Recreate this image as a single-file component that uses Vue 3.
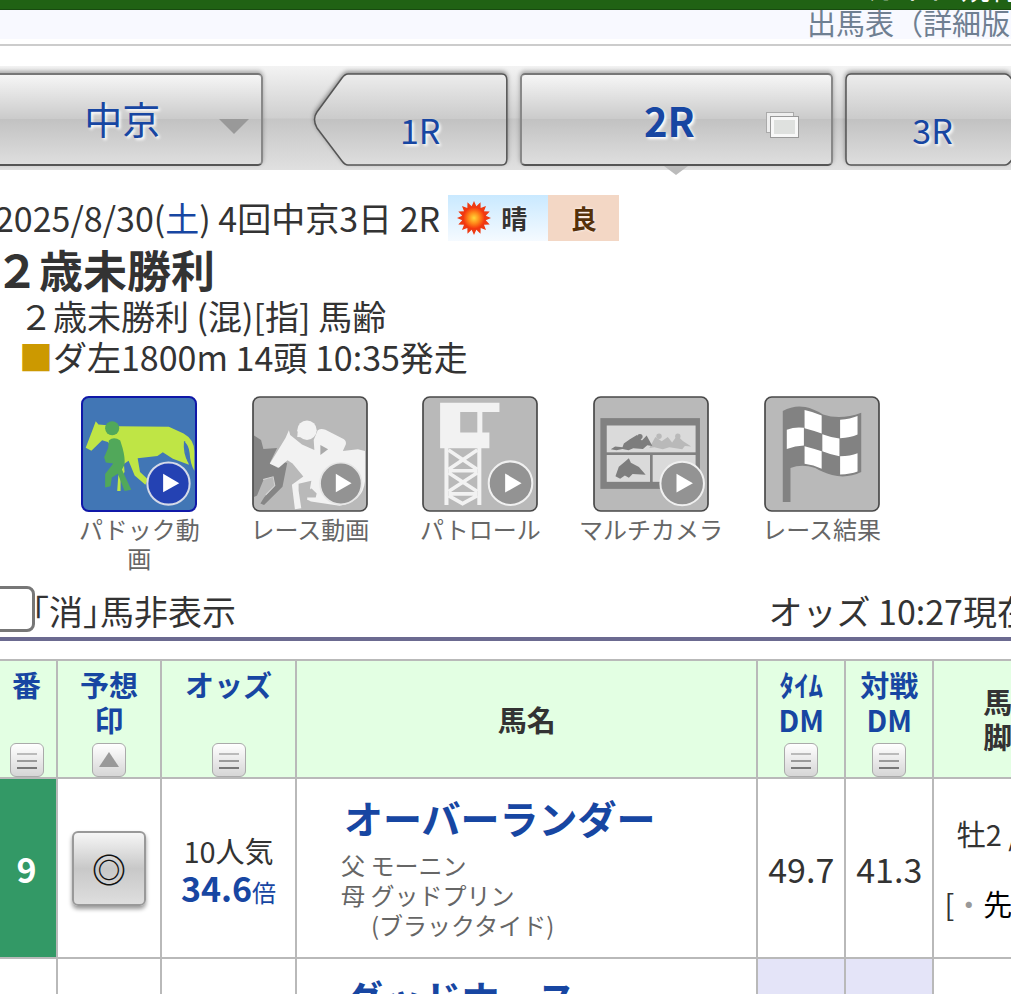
<template>
  <div class="page">
    <div class="site-bar"><span>ガイド 規約</span></div>
    <header class="page-title"><span>出馬表（詳細版）</span></header>

    <nav class="race-nav">
      <div class="venue">
        <select v-model="venue" class="plate" aria-label="開催場">
          <option>中京</option>
        </select>
        <i class="caret"></i>
      </div>
      <button class="race side prev">
        <svg class="shape" viewBox="0 0 195 93" preserveAspectRatio="none">
          <path d="M35 1H189Q194 1 194 7V86Q194 92 189 92H35Q32 92 29 88L4 55Q-1 46 4 39L29 5Q32 1 35 1Z" fill="url(#plate)" stroke="#555" stroke-width="1.5" />
        </svg>
        <span>1R</span>
      </button>
      <button class="race plate current">
        <span>2R</span>
        <svg class="windows" width="36" height="30" viewBox="0 0 36 30">
          <rect x="1.5" y="1.5" width="27" height="20" fill="#eee" stroke="#aaa" />
          <rect x="5.5" y="5.5" width="28" height="21" fill="#dfe1df" stroke="#999" />
          <rect x="7.5" y="7.5" width="24" height="17" fill="none" stroke="#f8f8f8" stroke-width="3" />
        </svg>
      </button>
      <button class="race side next">
        <svg class="shape" viewBox="0 0 195 93" preserveAspectRatio="none">
          <defs>
            <linearGradient id="plate" x1="0" y1="0" x2="0" y2="1">
              <stop offset="0" stop-color="#ededed" />
              <stop offset="0.49" stop-color="#cbcbcb" />
              <stop offset="0.5" stop-color="#c2c2c2" />
              <stop offset="1" stop-color="#dedede" />
            </linearGradient>
          </defs>
          <path d="M160 1H6Q1 1 1 7V86Q1 92 6 92H160Q163 92 166 88L191 55Q196 46 191 39L166 5Q163 1 160 1Z" fill="url(#plate)" stroke="#555" stroke-width="1.5" />
        </svg>
        <span>3R</span>
      </button>
    </nav>

    <main class="content">
      <div class="date">
        <span>2025/8/30(<b>土</b>) 4回中京3日 2R</span>
        <span class="badge fine">
          <svg width="34" height="34" viewBox="0 0 34 34">
            <defs>
              <radialGradient id="sun">
                <stop offset="0" stop-color="#ffd83a" />
                <stop offset="0.5" stop-color="#ff8a1a" />
                <stop offset="1" stop-color="#f4320d" />
              </radialGradient>
            </defs>
            <polygon :points="sunPoints" fill="#ee3a12" />
            <circle cx="17" cy="17" r="11" fill="url(#sun)" />
          </svg>
          晴
        </span>
        <span class="badge firm">良</span>
      </div>
      <h1>２歳未勝利</h1>
      <p>２歳未勝利 (混)[指] 馬齢</p>
      <p><span class="dirt">■</span>ダ左1800m 14頭 10:35発走</p>

      <div class="movies">
        <a href="#">
          <svg class="icon" viewBox="36 35 346 346">
            <rect x="39" y="38" width="340" height="340" rx="20" fill="#4176b5" stroke="#1018a8" stroke-width="6" />
            <path d="M80 110L88 120L150 125L298 127L342 147Q374 165 374 200V258Q362 238 360 205Q357 180 345 172Q344 205 358 240L310 222L280 203L264 214L205 221L212 262L236 284L228 300L196 272L178 228L164 238L166 262L154 280V318H144L147 275L157 240L130 190L116 172L99 167L67 198L50 189L72 132Z" fill="#bfe545" />
            <path d="M345 170Q342 205 357 232" fill="none" stroke="#4176b5" stroke-width="4" />
            <circle cx="129" cy="131" r="21" fill="#51a85a" />
            <path d="M119 168Q134 154 153 168L160 190Q168 220 166 240L158 254L186 315L166 318L146 267L128 278L124 304L108 308V268L132 236L110 233L105 218L117 190Z" fill="#51a85a" />
            <circle cx="297" cy="296" r="63" fill="#2442b3" stroke="#d5dae8" stroke-width="6" />
            <path d="M281 267L329 295L281 322Z" fill="#fff" />
          </svg>
          <span>パドック動<br />画</span>
        </a>
        <a href="#">
          <svg class="icon" viewBox="39 35 346 346">
            <rect x="42" y="38" width="340" height="340" rx="20" fill="#b9b9b9" stroke="#484848" stroke-width="5" />
            <path d="M45 153L66 166L73 193L114 190L92 235L116 250L135 232L144 235L130 306L75 360L64 356L75 338L107 301L101 277L74 283L54 332L45 336Z" fill="#858585" />
            <path d="M72 284L102 276L107 302L80 330" fill="none" stroke="#d5d5d5" stroke-width="3" />
            <path d="M149 137L153 151L188 180L225 196L223 166L235 137Q245 130 258 136L312 163Q321 169 319 179L310 199L355 194L376 199V290Q370 350 300 362L215 350L203 344L205 336L229 335L212 310L216 288L178 297V317L186 370L167 373L158 300L192 275L160 236L145 227L119 249L92 237L139 160Z" fill="#f2f2f2" />
            <path d="M243 181L266 194L243 211Z" fill="#aaa" />
            <path d="M216 310L232 326L229 338L205 338Z" fill="#b9b9b9" />
            <circle cx="203" cy="137" r="29" fill="#f2f2f2" />
            <path d="M175 145L174 157L188 158Z" fill="#f2f2f2" />
            <circle cx="304" cy="296" r="62" fill="#939393" stroke="#e6e6e6" stroke-width="5" />
            <path d="M289 267L336 295L289 322Z" fill="#fff" />
          </svg>
          <span>レース動画</span>
        </a>
        <a href="#">
          <svg class="icon" viewBox="39 35 346 346">
            <rect x="42" y="38" width="340" height="340" rx="20" fill="#b9b9b9" stroke="#484848" stroke-width="5" />
            <path d="M93 55H270V83H219V144H240V191H93ZM153 83V144H204V83Z" fill="#f2f2f2" fill-rule="evenodd" />
            <path d="M112 190V360M210 190V360" stroke="#f2f2f2" stroke-width="12" />
            <path d="M118 196L204 254M204 196L118 254M118 258H204M118 264L204 320M204 264L118 320M118 327H204M118 332L160 356L204 332" fill="none" stroke="#f2f2f2" stroke-width="11" />
            <circle cx="303" cy="295" r="65" fill="#939393" stroke="#f0f0f0" stroke-width="6" />
            <path d="M287 266L336 295L287 323Z" fill="#fff" />
          </svg>
          <span>パトロール</span>
        </a>
        <a href="#">
          <svg class="icon" viewBox="72 35 346 346">
            <rect x="75" y="38" width="340" height="340" rx="20" fill="#b9b9b9" stroke="#484848" stroke-width="5" />
            <rect x="94" y="101" width="297" height="211" fill="#818181" />
            <rect x="113" y="123" width="265" height="80" fill="#dadada" />
            <rect x="113" y="211" width="129" height="80" fill="#dadada" />
            <rect x="250" y="211" width="128" height="80" fill="#dadada" />
            <path d="M240 190L258 157L277 170L295 157L308 174L323 153L340 169L365 186L346 184L338 194L300 188L280 194L255 188Z" fill="#b9b9b9" />
            <circle cx="269" cy="155" r="8" fill="#b9b9b9" />
            <circle cx="325" cy="155" r="8" fill="#b9b9b9" />
            <path d="M125 194L138 186L160 188L164 177L182 164L203 151L218 168L232 153L249 184L234 182L221 193L192 191L178 197L160 193L142 197Z" fill="#7d7d7d" />
            <circle cx="212" cy="156" r="8" fill="#7d7d7d" />
            <path d="M179 221L185 234L209 247L229 270L190 268L179 279L167 272L153 282L139 274L149 246L166 232Z" fill="#7d7d7d" />
            <circle cx="338" cy="296" r="65" fill="#939393" stroke="#f0f0f0" stroke-width="6" />
            <path d="M321 267L370 295L321 323Z" fill="#fff" />
          </svg>
          <span>マルチカメラ</span>
        </a>
        <a href="#">
          <svg class="icon" viewBox="42 35 346 346">
            <rect x="45" y="38" width="340" height="340" rx="20" fill="#b9b9b9" stroke="#484848" stroke-width="5" />
            <path d="M98 80Q130 62 165 68Q190 73 218 90Q270 108 332 85V262Q290 282 245 271Q215 262 195 250Q155 236 121 250V351H98Z" fill="#828282" />
            <path d="M163 77Q190 83 214 93V147Q190 138 163 131ZM269 106Q300 104 321 95V150Q300 160 269 161ZM110 136Q135 126 161 130V183Q135 184 110 193ZM216 149Q240 158 267 162V215Q240 210 216 200ZM163 185Q190 192 214 200V252Q190 240 163 237ZM269 215Q300 215 321 206V260Q300 268 269 269Z" fill="#fff" />
          </svg>
          <span>レース結果</span>
        </a>
      </div>

      <div class="options">
        <label><input v-model="hideErased" type="checkbox" />｢消｣馬非表示</label>
        <span>オッズ 10:27現在</span>
      </div>

      <table>
        <colgroup>
          <col class="c-num" />
          <col class="c-mark" />
          <col class="c-odds" />
          <col />
          <col class="c-dm" />
          <col class="c-dm" />
          <col class="c-age" />
        </colgroup>
        <thead>
          <tr>
            <th v-for="(h, i) in headers" :key="i">
              <div v-if="h.sort" class="sortable">
                <a href="#"><template v-for="(line, n) in h.lines" :key="n"><br v-if="n" />{{ line }}</template></a>
                <button class="sort" :aria-label="h.lines.join('')">
                  <svg v-if="h.sort === 'up'" width="24" height="24" viewBox="0 0 24 24">
                    <path d="M12 4L22 19H2Z" fill="#999" />
                  </svg>
                  <svg v-else width="24" height="24" viewBox="0 0 24 24">
                    <path d="M2 6H22" stroke="#bbb" stroke-width="2" />
                    <path d="M2 13H22" stroke="#999" stroke-width="2" />
                    <path d="M2 20H22" stroke="#777" stroke-width="2" />
                  </svg>
                </button>
              </div>
              <template v-else><template v-for="(line, n) in h.lines" :key="n"><br v-if="n" />{{ line }}</template></template>
            </th>
          </tr>
        </thead>
        <tbody>
          <tr>
            <td class="num">9</td>
            <td><button class="mark">◎</button></td>
            <td class="odds">10人気<br /><a href="#"><b>34.6</b><small>倍</small></a></td>
            <td class="name">
              <a href="#">オーバーランダー</a>
              <div>父 モーニン</div>
              <div>母 グッドプリン</div>
              <div class="sire">(ブラックタイド)</div>
            </td>
            <td class="dm">49.7</td>
            <td class="dm">41.3</td>
            <td class="age">
              <div>牡2 /480</div>
              <div class="style">[<i>・</i><em>先</em><i>・・</i>]</div>
            </td>
          </tr>
          <tr>
            <td></td>
            <td></td>
            <td></td>
            <td class="name"><a href="#">グッドホース</a></td>
            <td class="dm best"></td>
            <td class="dm best"></td>
            <td></td>
          </tr>
        </tbody>
      </table>
    </main>
  </div>
</template>

<script setup>
import { ref } from "vue";

const venue = ref("中京");
const hideErased = ref(false);

// 見出し
const headers = [
  { lines: ["番"], sort: "list" },
  { lines: ["予想", "印"], sort: "up" },
  { lines: ["オッズ"], sort: "list" },
  { lines: ["馬名"] },
  { lines: ["ﾀｲﾑ", "DM"], sort: "list" },
  { lines: ["対戦", "DM"], sort: "list" },
  { lines: ["馬齢", "脚質"] },
];

// 太陽のギザギザ
const sunPoints = Array.from({ length: 32 }, (_, i) => {
  const r = i % 2 ? 12 : 17;
  const a = (i * Math.PI) / 16;
  return `${17 + r * Math.cos(a)},${17 + r * Math.sin(a)}`;
}).join(" ");
</script>

<style>
body {
  margin: 0;
  background: #fff;
}
</style>

<style scoped>
* {
  box-sizing: border-box;
}

.page {
  height: 100vh;
  overflow: hidden;
  font-family: "Noto Sans CJK JP", sans-serif;
  font-size: 34px;
  color: #333;
}

a {
  color: #1746a2;
  text-decoration: none;
}

button,
select,
input {
  font-family: inherit;
  margin: 0;
}

.site-bar {
  display: flex;
  justify-content: flex-end;
  align-items: flex-end;
  height: 10px;
  overflow: hidden;
  background: #206214;
  border-bottom: 1px solid #184a10;
  color: #fff;
  font-size: 29px;
  line-height: 44px;
  white-space: nowrap;
}

.site-bar span {
  margin-right: -8px;
}

.page-title {
  display: flex;
  justify-content: flex-end;
  height: 36px;
  margin-bottom: 20px;
  background: linear-gradient(#f8f9ff 29px, #fff 29px);
  border-bottom: 2px solid #ccc;
  color: #6f7f92;
  font-size: 29px;
  line-height: 25px;
  white-space: nowrap;
}

.page-title span {
  margin-right: -28px;
}

/* レース選択 */
.race-nav {
  display: flex;
  height: 104px;
  margin: 0 -29px 0 -10px;
  padding: 7px 0 4px;
  background: linear-gradient(#f3f3f3, #cfcfcf 50%, #c6c6c6 51%, #e0e0e0);
}

.venue {
  position: relative;
  flex: 1 1 273px;
  margin-right: 50px;
}

.plate {
  background: linear-gradient(#f6f6f6, #cbcbcb 49%, #c2c2c2 50%, #dedede);
  border: 2px solid #888;
  border-top-color: #777;
  border-bottom-color: #555;
  border-radius: 5px;
  box-shadow: 0 -2px 4px rgba(0, 0, 0, 0.3);
  color: #1746a2;
  text-shadow: 2px 2px 3px #fff;
}

.venue select {
  width: 100%;
  height: 100%;
  padding: 0 8px 4px 0;
  appearance: none;
  font-size: 38px;
  text-align-last: center;
}

.caret {
  position: absolute;
  right: 14px;
  top: 46px;
  border: 15px solid transparent;
  border-top-color: #999;
  border-bottom: 0;
  pointer-events: none;
}

.race {
  position: relative;
  flex: 1 1 195px;
  padding: 0;
  color: #1746a2;
  text-shadow: 2px 2px 3px #fff;
}

.race.side {
  padding-top: 20px;
  border: 0;
  background: none;
  font-size: 34px;
}

.race .shape {
  position: absolute;
  inset: 0;
  width: 100%;
  height: 100%;
  filter: drop-shadow(0 -2px 2px rgba(0, 0, 0, 0.4));
}

.race span {
  position: relative;
}

.race.prev {
  padding-left: 20px;
}

.race.next {
  padding-right: 20px;
}

.race.current {
  flex: 1 1 314px;
  margin: 0 12px;
  padding-right: 14px;
  font-size: 40px;
  font-weight: bold;
}

.race.current::after {
  content: "";
  position: absolute;
  left: calc(50% - 12px);
  bottom: -11px;
  border: 12px solid transparent;
  border-top: 9px solid #bbb;
  border-bottom: 0;
}

.windows {
  position: absolute;
  right: 30px;
  top: 36px;
}

/* レース情報 */
.content {
  margin-left: -5px;
}

.date {
  display: flex;
  height: 46px;
  margin-top: 25px;
  line-height: 46px;
  white-space: nowrap;
}

.date b {
  color: #1746a2;
  font-weight: normal;
}

.badge {
  display: flex;
  align-items: center;
  justify-content: center;
  font-size: 26px;
  font-weight: bold;
  text-shadow: 0 0 3px #fff;
}

.fine {
  gap: 10px;
  width: 100px;
  margin-left: 8px;
  padding-right: 12px;
  background: linear-gradient(#c9e9ff, #f5faff);
}

.firm {
  width: 71px;
  background: #f3d7c5;
  color: #553008;
}

h1 {
  margin: 2px 0 0;
  font-size: 44px;
  line-height: 52px;
}

p {
  margin: 0 0 0 24px;
  line-height: 41px;
}

.dirt {
  color: #cc9900;
}

.movies {
  display: flex;
  align-items: flex-start;
  height: 190px;
  margin-top: 19px;
  padding: 0 104px 0 59px;
}

.movies a {
  flex: 1;
  display: flex;
  flex-direction: column;
  align-items: center;
  gap: 2px;
  color: #666;
  font-size: 24px;
  line-height: 29px;
  text-align: center;
  white-space: nowrap;
}

.icon {
  width: 116px;
  height: 116px;
}

.options {
  display: flex;
  justify-content: space-between;
  height: 55px;
  margin-right: -20px;
  border-bottom: 4px solid #6b6a90;
  line-height: 49px;
  white-space: nowrap;
}

.options label {
  display: flex;
}

.options input {
  width: 46px;
  height: 46px;
  margin: 0 -3px 0 -6px;
  appearance: none;
  border: 3px solid #777;
  border-radius: 8px;
  background: #fff;
}

/* 出馬表 */
table {
  width: 108%;
  margin-top: 18px;
  table-layout: fixed;
  border-collapse: collapse;
}

.c-num {
  width: 61px;
}

.c-mark {
  width: 104px;
}

.c-odds {
  width: 135px;
}

.c-dm {
  width: 88px;
}

.c-age {
  width: 158px;
}

th,
td {
  padding: 0;
  border: 2px solid #b9b9b9;
  text-align: center;
  white-space: nowrap;
}

th {
  height: 118px;
  background: #e3ffe3;
  font-size: 29px;
  line-height: 35px;
}

.sortable {
  display: flex;
  flex-direction: column;
  align-items: center;
  justify-content: space-between;
  height: 116px;
  padding-top: 6px;
}

.sort {
  display: flex;
  align-items: center;
  justify-content: center;
  width: 34px;
  height: 34px;
  padding: 0;
  border: 1px solid #aaa;
  border-radius: 6px;
  background: linear-gradient(#fff, #d6d6d6);
}

tbody tr {
  height: 180px;
}

.num {
  background: #339966;
  color: #fff;
  font-weight: bold;
}

.mark {
  width: 74px;
  height: 75px;
  padding: 0;
  border: 2px solid #999;
  border-radius: 6px;
  background: linear-gradient(#f6f6f6, #c8c8c8 50%, #dedede);
  box-shadow: 0 3px 4px rgba(0, 0, 0, 0.4);
  color: #111;
  font-size: 34px;
  font-weight: bold;
  vertical-align: middle;
}

.odds {
  padding-top: 6px;
  font-size: 29px;
  line-height: 38px;
}

.odds b {
  font-size: 34px;
}

.odds small {
  font-size: 24px;
}

.name {
  padding: 14px 0 0 44px;
  color: #666;
  font-size: 24px;
  line-height: 30px;
  text-align: left;
  vertical-align: top;
}

.name a {
  display: block;
  margin-bottom: 8px;
  padding-left: 3px;
  font-size: 39px;
  font-weight: bold;
  line-height: 49px;
}

.sire {
  padding-left: 30px;
}

.best {
  background: #e4e4f8;
}

.age {
  font-size: 29px;
  line-height: 70px;
}

.style em {
  color: #000;
  font-style: normal;
}

.style i {
  color: #999;
  font-style: normal;
}
</style>
